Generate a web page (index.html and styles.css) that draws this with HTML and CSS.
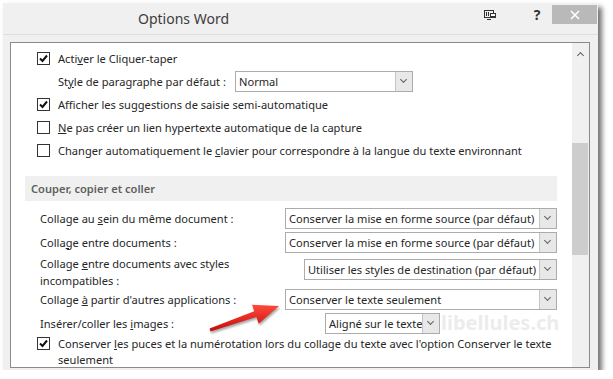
FILE: index.html
```html
<!DOCTYPE html>
<html lang="fr">
<head>
    <meta charset="UTF-8">
    <meta name="viewport" content="width=device-width, initial-scale=1.0">
    <title>Options Word</title>
    <link rel="stylesheet" href="styles.css">
</head>
<body>
    <div class="window">
        <header class="titlebar">
            <h1 class="title">Options Word</h1>
            <div class="title-actions">
                <span class="ribbon-btn">
                    <svg width="12" height="10" viewBox="0 0 12 10">
                        <rect x="0.5" y="0.5" width="9" height="7" fill="none" stroke="#333"/>
                        <path d="M2.5 2v4M4.5 2v4" stroke="#333"/>
                        <rect x="6" y="3" width="6" height="5" fill="#333"/>
                        <rect x="7" y="4" width="4" height="2" fill="#fff"/>
                        <path d="M3 9.5h4" stroke="#333"/>
                    </svg>
                </span>
                <span class="help-btn">?</span>
                <span class="close-btn">
                    <svg width="10" height="10" viewBox="0 0 10 10">
                        <path d="M1 1l8 8M9 1l-8 8" stroke="#fff" stroke-width="1.6"/>
                    </svg>
                </span>
            </div>
        </header>

        <div class="frame">
            <main class="options">
                <div class="row check-row">
                    <span class="checkbox checked"><svg width="11" height="11" viewBox="0 0 11 11"><path d="M2 5.5l2.5 2.5 4.5-5.5" fill="none" stroke="#111" stroke-width="2"/></svg></span>
                    <span>Acti<u>v</u>er le Cliquer-taper</span>
                </div>
                <div class="row sub-row">
                    <span class="sub-label">St<u>y</u>le de paragraphe par défaut :</span>
                    <div class="combo combo-style">
                        <span class="combo-text">Normal</span>
                        <span class="combo-arrow"></span>
                    </div>
                </div>
                <div class="row check-row">
                    <span class="checkbox checked"><svg width="11" height="11" viewBox="0 0 11 11"><path d="M2 5.5l2.5 2.5 4.5-5.5" fill="none" stroke="#111" stroke-width="2"/></svg></span>
                    <span>Afficher les suggestions de saisie semi-automatique</span>
                </div>
                <div class="row check-row">
                    <span class="checkbox"></span>
                    <span><u>N</u>e pas créer un lien hypertexte automatique de la capture</span>
                </div>
                <div class="row check-row">
                    <span class="checkbox"></span>
                    <span>Changer automatiquement le <u>c</u>lavier pour correspondre à la langue du texte environnant</span>
                </div>

                <div class="section-title">Couper, copier et coller</div>

                <div class="row paste-row first">
                    <span class="paste-label">Collage au <u>s</u>ein du même document :</span>
                    <div class="combo combo-wide">
                        <span class="combo-text">Conserver la mise en forme source (par défaut)</span>
                        <span class="combo-arrow"></span>
                    </div>
                </div>
                <div class="row paste-row">
                    <span class="paste-label">Colla<u>g</u>e entre documents :</span>
                    <div class="combo combo-wide">
                        <span class="combo-text">Conserver la mise en forme source (par défaut)</span>
                        <span class="combo-arrow"></span>
                    </div>
                </div>
                <div class="row paste-row tall">
                    <span class="paste-label">Collage <u>e</u>ntre documents avec styles<br>incompatibles :</span>
                    <div class="combo combo-mid">
                        <span class="combo-text">Utiliser les styles de destination (par défaut)</span>
                        <span class="combo-arrow"></span>
                    </div>
                </div>
                <div class="row paste-row">
                    <span class="paste-label">Collage <u>à</u> partir d'autres applications :</span>
                    <div class="combo combo-wide">
                        <span class="combo-text">Conserver le texte seulement</span>
                        <span class="combo-arrow"></span>
                    </div>
                </div>
                <div class="row paste-row">
                    <span class="paste-label">Insérer/coller les <u>i</u>mages :</span>
                    <div class="combo combo-small">
                        <span class="combo-text">Aligné sur le texte</span>
                        <span class="combo-arrow"></span>
                    </div>
                </div>
                <div class="row check-row multi">
                    <span class="checkbox checked"><svg width="11" height="11" viewBox="0 0 11 11"><path d="M2 5.5l2.5 2.5 4.5-5.5" fill="none" stroke="#111" stroke-width="2"/></svg></span>
                    <span>Conserver <u>l</u>es puces et la numérotation lors du collage du texte avec l'option Conserver le texte<br>seulement</span>
                </div>
            </main>

            <div class="scrollbar">
                <span class="scroll-up"></span>
                <span class="scroll-thumb"></span>
            </div>
        </div>

        <span class="watermark">libellules.ch</span>
        <svg class="red-arrow" width="85" height="42" viewBox="0 0 85 42">
            <defs>
                <linearGradient id="arrowFill" x1="0" y1="0" x2="0" y2="1">
                    <stop offset="0" stop-color="#ff4a3a"/>
                    <stop offset="1" stop-color="#c40d0d"/>
                </linearGradient>
            </defs>
            <polygon points="9.5,33.4 54.2,16.2 52.1,9.8 79,11 58.7,28.7 56.4,22 10.5,36.6" fill="url(#arrowFill)"/>
        </svg>
    </div>
</body>
</html>
```

FILE: styles.css
```css
body {
    margin: 0;
    font-family: 'Noto Sans', 'Liberation Sans', sans-serif;
    font-size: 11.1px;
    background-color: #ffffff;
    color: #262626;
}

.window {
    position: relative;
    margin: 3px 0 0 3px;
    width: 595px;
    height: 367px;
    background-color: #f0f0f0;
    box-shadow: 4px 4px 5px rgba(0, 0, 0, 0.55);
}

/* Title bar */
.titlebar {
    display: flex;
    align-items: flex-start;
    height: 31px;
    border-bottom: 1px solid #dedede;
}

.title {
    margin: 0;
    padding: 6px 0 0 135px;
    font-size: 14px;
    font-weight: normal;
    color: #3c3c3c;
}

.title-actions {
    display: flex;
    align-items: center;
    margin-left: auto;
    margin-top: 2px;
    margin-right: 1px;
}

.ribbon-btn,
.help-btn {
    width: 24px;
    height: 19px;
    display: flex;
    align-items: center;
    justify-content: center;
}

.ribbon-btn {
    margin-right: 23px;
}

.help-btn {
    margin-right: 3px;
    font-weight: bold;
    font-size: 14px;
    color: #333;
}

.close-btn {
    width: 45px;
    height: 19px;
    background-color: #b9b9b9;
    display: flex;
    align-items: center;
    justify-content: center;
}

/* Content frame */
.frame {
    display: flex;
    margin: 7px 0 0 7px;
    width: 578px;
    height: 324px;
    border: 1px solid #8a8a8a;
    background-color: #ffffff;
}

.options {
    width: 532px;
    padding: 4px 15px 0 14px;
    overflow: hidden;
}

.row {
    display: flex;
    align-items: center;
    height: 23px;
    white-space: nowrap;
}

.check-row {
    padding-left: 12px;
}

.checkbox {
    width: 11px;
    height: 11px;
    border: 1px solid #333;
    background-color: #fff;
    margin-right: 8px;
    display: flex;
    align-items: center;
    justify-content: center;
    flex-shrink: 0;
}

.sub-row {
    padding-left: 33px;
}

.sub-label {
    width: 177px;
}

.section-title {
    margin-top: 14px;
    height: 25px;
    line-height: 25px;
    padding-left: 6px;
    background-color: #f0f0f0;
    color: #5f5f5f;
    font-weight: 600;
}

.paste-row {
    padding-left: 15px;
    height: 24px;
}

.paste-row.first {
    margin-top: 5px;
}

.paste-row.tall {
    height: 33px;
    align-items: flex-start;
    line-height: 17px;
}

.paste-row.tall .paste-label {
    padding-top: 1px;
}

.paste-row.tall .combo {
    margin-top: 5px;
}

.paste-label {
    flex: 1;
}

.check-row.multi {
    height: auto;
    align-items: flex-start;
    line-height: 16px;
    margin-top: 1px;
}

.check-row.multi .checkbox {
    margin-top: 1px;
}

/* Combo boxes */
.combo {
    display: flex;
    height: 19px;
    border: 1px solid #acacac;
    background-color: #fff;
}

.combo-text {
    flex: 1;
    padding-left: 3px;
    line-height: 19px;
    overflow: hidden;
}

.combo-arrow {
    width: 16px;
    border-left: 1px solid #c4c4c4;
    background-color: #e8e8e8;
    position: relative;
}

.combo-arrow::after {
    content: "";
    position: absolute;
    left: 5px;
    top: 5px;
    width: 4px;
    height: 4px;
    border-right: 1.5px solid #606060;
    border-bottom: 1.5px solid #606060;
    transform: rotate(45deg);
}

.combo-style {
    width: 176px;
}

.combo-wide {
    width: 270px;
}

.combo-mid {
    width: 251px;
}

.combo-small {
    width: 113px;
    margin-right: 117px;
}

/* Scrollbar */
.scrollbar {
    width: 17px;
    background-color: #f0f0f0;
    position: relative;
}

.scroll-up {
    position: absolute;
    left: 6px;
    top: 10px;
    width: 4px;
    height: 4px;
    border-left: 1.5px solid #606060;
    border-top: 1.5px solid #606060;
    transform: rotate(45deg);
}

.scroll-thumb {
    position: absolute;
    left: 0;
    top: 100px;
    width: 16px;
    height: 112px;
    background-color: #cdcdcd;
}

/* Overlays */
.watermark {
    position: absolute;
    left: 438px;
    top: 310px;
    font-size: 20px;
    line-height: 20px;
    font-weight: bold;
    color: rgba(190, 190, 190, 0.3);
    pointer-events: none;
}

.red-arrow {
    position: absolute;
    left: 197px;
    top: 292px;
    filter: drop-shadow(1px 2px 1px rgba(0, 0, 0, 0.35));
}
```
